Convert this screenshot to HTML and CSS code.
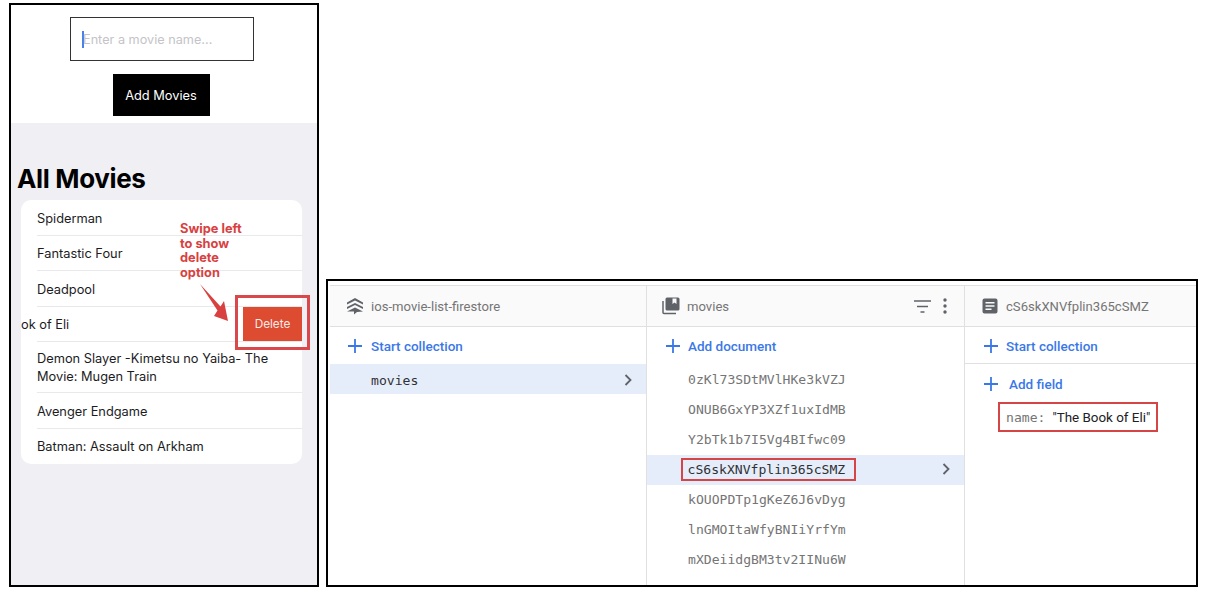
FILE: index.html
```html
<!DOCTYPE html>
<html lang="en">
<head>
<meta charset="utf-8">
<title>Movie list</title>
<link rel="stylesheet" href="styles.css">
</head>
<body>
<main class="page">
  <section class="phone">
    <div class="form">
      <div class="input"><span class="caret"></span><span class="placeholder">Enter a movie name...</span></div>
      <div class="add-btn">Add Movies</div>
    </div>
    <div class="content">
      <h1 class="title">All Movies</h1>
      <ul class="list">
        <li class="row"><span>Spiderman</span></li>
        <li class="row"><span>Fantastic Four</span></li>
        <li class="row"><span>Deadpool</span></li>
        <li class="row row-swiped"><span>ok of Eli</span><span class="delete">Delete</span></li>
        <li class="row row-two"><span>Demon Slayer -Kimetsu no Yaiba- The Movie: Mugen Train</span></li>
        <li class="row"><span>Avenger Endgame</span></li>
        <li class="row row-last"><span>Batman: Assault on Arkham</span></li>
      </ul>
    </div>
    <div class="note">Swipe left<br>to show<br>delete<br>option</div>
    <svg class="note-arrow" width="36" height="42" viewBox="0 0 36 42"><path d="M2 2 L22.500 24.500 L26 19 L30 39 L16 34 L19.500 28.500 Z" fill="#d8413f"/></svg>
    <div class="delete-box"></div>
  </section>

  <section class="console">
    <div class="col col-root">
      <header class="col-head">
        <svg class="head-icon" width="20" height="18" viewBox="0 0 20 18"><path d="M10 1 L18 5.500 V7.500 L10 3.500 L2 7.500 V5.500 Z M10 6 L18 10 V12 L10 8 L2 12 V10 Z M2 14.500 L10 10.500 L18 14.500 L12 15 L9 17.500 V14.500 Z" fill="#5f6368"/></svg>
        <span class="head-text">ios-movie-list-firestore</span>
      </header>
      <div class="action">
        <svg class="plus" width="14" height="14" viewBox="0 0 14 14"><path d="M7 0 V14 M0 7 H14" stroke="#3b78e7" stroke-width="1.800" fill="none"/></svg>
        <span class="action-text">Start collection</span>
      </div>
      <div class="item item-selected">
        <span class="mono mono-dark">movies</span>
        <svg class="chev" width="8" height="12" viewBox="0 0 8 12"><path d="M1.500 1 L6.500 6 L1.500 11" stroke="#5f6368" stroke-width="1.800" fill="none"/></svg>
      </div>
    </div>

    <div class="col col-docs">
      <header class="col-head">
        <svg class="head-icon" width="18" height="18" viewBox="0 0 18 18"><path d="M5 0.500 H16 A1.500 1.500 0 0 1 17.500 2 V12 A1.500 1.500 0 0 1 16 13.500 H5 A1.500 1.500 0 0 1 3.500 12 V2 A1.500 1.500 0 0 1 5 0.500 Z M10.500 1.500 V7 L12.500 5.500 L14.500 7 V1.500 Z" fill="#5f6368" fill-rule="evenodd"/><path d="M1 4 V15.500 A1 1 0 0 0 2 16.500 H14" stroke="#5f6368" stroke-width="1.500" fill="none"/></svg>
        <span class="head-text">movies</span>
        <svg class="filter" width="17" height="13" viewBox="0 0 17 13"><path d="M0 1 H17 M3 6.500 H14 M6.500 12 H10.500" stroke="#5f6368" stroke-width="1.500" fill="none"/></svg>
        <svg class="dots" width="4" height="16" viewBox="0 0 4 16"><circle cx="2" cy="2" r="1.700" fill="#5f6368"/><circle cx="2" cy="8" r="1.700" fill="#5f6368"/><circle cx="2" cy="14" r="1.700" fill="#5f6368"/></svg>
      </header>
      <div class="action">
        <svg class="plus" width="14" height="14" viewBox="0 0 14 14"><path d="M7 0 V14 M0 7 H14" stroke="#3b78e7" stroke-width="1.800" fill="none"/></svg>
        <span class="action-text">Add document</span>
      </div>
      <div class="item"><span class="mono">0zKl73SDtMVlHKe3kVZJ</span></div>
      <div class="item"><span class="mono">ONUB6GxYP3XZf1uxIdMB</span></div>
      <div class="item"><span class="mono">Y2bTk1b7I5Vg4BIfwc09</span></div>
      <div class="item item-selected">
        <span class="mono mono-dark mark">cS6skXNVfplin365cSMZ</span>
        <svg class="chev" width="8" height="12" viewBox="0 0 8 12"><path d="M1.500 1 L6.500 6 L1.500 11" stroke="#5f6368" stroke-width="1.800" fill="none"/></svg>
      </div>
      <div class="item"><span class="mono">kOUOPDTp1gKeZ6J6vDyg</span></div>
      <div class="item"><span class="mono">lnGMOItaWfyBNIiYrfYm</span></div>
      <div class="item"><span class="mono">mXDeiidgBM3tv2IINu6W</span></div>
    </div>

    <div class="col col-doc">
      <header class="col-head">
        <svg class="head-icon" width="16" height="16" viewBox="0 0 16 16"><path d="M2.500 0.500 H13.500 A2 2 0 0 1 15.500 2.500 V13.500 A2 2 0 0 1 13.500 15.500 H2.500 A2 2 0 0 1 0.500 13.500 V2.500 A2 2 0 0 1 2.500 0.500 Z M3.500 4 V5.500 H12.500 V4 Z M3.500 7.200 V8.700 H12.500 V7.200 Z M3.500 10.400 V11.900 H9.500 V10.400 Z" fill="#5f6368" fill-rule="evenodd"/></svg>
        <span class="head-text">cS6skXNVfplin365cSMZ</span>
      </header>
      <div class="action action-ruled">
        <svg class="plus" width="14" height="14" viewBox="0 0 14 14"><path d="M7 0 V14 M0 7 H14" stroke="#3b78e7" stroke-width="1.800" fill="none"/></svg>
        <span class="action-text">Start collection</span>
      </div>
      <div class="action action-field">
        <svg class="plus" width="14" height="14" viewBox="0 0 14 14"><path d="M7 0 V14 M0 7 H14" stroke="#3b78e7" stroke-width="1.800" fill="none"/></svg>
        <span class="action-text">Add field</span>
      </div>
      <div class="field"><span class="mono field-key">name:</span><span class="field-value">"The Book of Eli"</span></div>
    </div>
  </section>
</main>
</body>
</html>
```
FILE: styles.css
```css
* { box-sizing: border-box; }
html, body { margin: 0; padding: 0; background: #fff; }
body { width: 1209px; height: 602px; overflow: hidden; }
.page { display: flex; align-items: flex-start; gap: 7px; padding: 3px 0 0 9px; }

.phone { position: relative; width: 310px; height: 584px; border: 2px solid #000; display: flex; flex-direction: column; font-family: Inter, "Liberation Sans", sans-serif; }
.form { height: 118px; display: flex; flex-direction: column; align-items: center; padding: 12px 6px 0 0; background: #fff; }
.input { width: 184px; height: 44px; margin-left: 2px; border: 1px solid #333; display: flex; align-items: center; padding-left: 11px; font-size: 12.700px; }
.caret { width: 2px; height: 17px; background: #4a80ee; margin-right: -1px; }
.placeholder { color: #c4c4c8; }
.add-btn { margin-top: 13px; width: 97px; height: 42px; background: #000; color: #fff; display: flex; align-items: center; justify-content: center; font-size: 12.800px; }
.content { flex: 1; background: #efeff4; padding: 39px 0 0 6px; }
.title { margin: 0; font-size: 26px; line-height: 33px; font-weight: 700; color: #000; letter-spacing: -0.350px; }
.list { list-style: none; margin: 5px 0 0 4px; padding: 0; width: 281px; background: #fff; border-radius: 10px; overflow: hidden; }
.row { position: relative; margin-left: 16px; padding: 9.500px 30px 8.100px 0; border-bottom: 1px solid #e9e9ec; font-size: 12.800px; line-height: 17px; color: #1c1c1e; }
.row-two { padding-top: 7.500px; padding-bottom: 6.500px; line-height: 18px; }
.row-last { border-bottom: 0; padding-bottom: 9px; }
.row-swiped { text-indent: -16px; }
.delete { position: absolute; right: 0; top: 0; bottom: 0; width: 59px; background: #dd4b31; color: #fbe9e5; font-size: 11.800px; display: flex; align-items: center; justify-content: center; text-indent: 0; }
.note { position: absolute; left: 169px; top: 217px; color: #d8413f; font-weight: 700; font-size: 12.800px; line-height: 14.500px; }
.note-arrow { position: absolute; left: 187px; top: 277px; }
.delete-box { position: absolute; left: 224px; top: 290px; width: 75px; height: 55px; border: 3px solid #d9484a; }

.console { margin-top: 276px; width: 872px; height: 308px; border: 2px solid #000; display: grid; grid-template-columns: 317px 318px 1fr; padding: 4px 0 0 2px; font-family: Roboto, "Liberation Sans", sans-serif; }
.col { border-right: 1px solid #e0e0e0; min-width: 0; }
.col-doc { border-right: 0; }
.col-head { height: 42px; display: flex; align-items: center; background: #fafafa; border-top: 1px solid #e0e0e0; border-bottom: 1px solid #e0e0e0; padding-left: 15px; gap: 6px; }
.head-icon { flex: none; }
.head-text { font-size: 13.100px; color: #757575; }
.col-docs .col-head { padding-left: 15px; gap: 7px; }
.col-doc .col-head { padding-left: 17px; gap: 8px; }
.filter { margin-left: auto; margin-right: 5px; }
.dots { margin-right: 17px; }
.action { height: 37px; display: flex; align-items: center; gap: 9px; padding-left: 18px; }
.col-docs .action { padding-left: 19px; gap: 8px; height: 38px; }
.col-doc .action { padding-left: 19px; gap: 8px; }
.action-ruled { border-bottom: 1px solid #e0e0e0; padding-top: 2px; }
.action-text { font-size: 13.500px; font-weight: 500; color: #3b78e7; }
.col-doc .action-field { height: 38px; gap: 11px; padding-top: 2px; }
.item { height: 30px; display: flex; align-items: center; padding: 0 14px 0 41px; }
.col-root .item { padding-top: 2px; }
.col-docs .item { padding-bottom: 2px; }
.item-selected { background: #e6edfa; justify-content: space-between; }
.mono { font-family: "DejaVu Sans Mono", "Liberation Mono", monospace; font-size: 13.100px; color: #757575; white-space: nowrap; }
.mono-dark { color: #303134; }
.mark { border: 2.500px solid #d64545; padding: 2px 8.500px 2px 4.500px; margin-left: -7px; }
.field { display: inline-flex; align-items: center; margin-left: 33px; height: 30px; width: 160px; border: 2.500px solid #d64545; padding: 1px 0 0 6px; gap: 7px; font-size: 13.400px; color: #202124; }
.field-value { white-space: nowrap; }
```
